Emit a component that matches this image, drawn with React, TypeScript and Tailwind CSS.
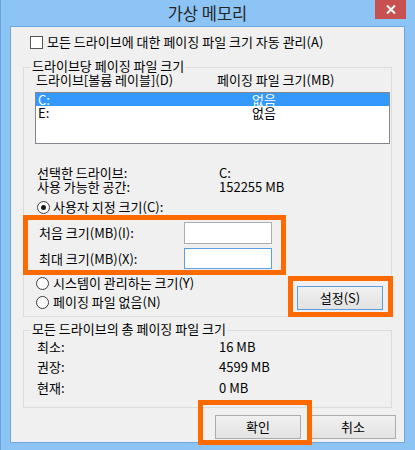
import React from "react";

const FONT = "font-['Noto_Sans_CJK_KR','Noto_Sans',sans-serif]";

function Radio({ checked }: { checked?: boolean }) {
  return (
    <span className="w-[13px] h-[13px] rounded-full border border-[#3c3c3c] bg-white flex items-center justify-center shrink-0">
      {checked && <span className="w-[5px] h-[5px] rounded-full bg-[#1a1a1a]" />}
    </span>
  );
}

function GroupBox({ label, className, children }: { label: string; className: string; children: React.ReactNode }) {
  return (
    <div className={"relative ml-[12px] w-[369px] border border-[#dcdcdc] flex flex-col " + className}>
      <span className="absolute left-[7px] top-[-8px] px-[1px] bg-[#f0f0f0] leading-[12px]">{label}</span>
      {children}
    </div>
  );
}

function InfoRow({ label, value, className }: { label: string; value: string; className?: string }) {
  return (
    <div className={"flex h-[14px] items-center pl-[13px] " + (className ?? "")}>
      <span className="w-[182px]">{label}</span>
      <span>{value}</span>
    </div>
  );
}

function WinButton({ text, focused }: { text: string; focused?: boolean }) {
  return (
    <button
      className={
        "w-[86px] h-[24px] flex items-center justify-center bg-gradient-to-b from-[#f0f0f0] to-[#e3e3e3] border " +
        (focused ? "border-[#5aa0e0]" : "border-[#acacac]")
      }
    >
      {text}
    </button>
  );
}

export default function App() {
  return (
    <div className={"relative w-[415px] h-[450px] bg-[#8cc5f5] text-[13px] leading-[14px] text-black overflow-hidden border-l border-[#6aa4dd] " + FONT}>
      {/* title bar */}
      <div className="h-[26px] flex items-start">
        <div className="w-[39px]" />
        <div className="flex-1 h-[26px] flex items-center justify-center text-[16.5px] text-[#262626]">가상 메모리</div>
        <div className="w-[31px] h-[19px] mr-[9px] bg-[#c75050] flex items-center justify-center">
          <svg width="10" height="9" viewBox="0 0 10 9">
            <path d="M1 0.5 L9 8.5 M9 0.5 L1 8.5" stroke="white" strokeWidth="2" />
          </svg>
        </div>
      </div>

      {/* client area */}
      <div className="ml-[9px] w-[395px] h-[417px] border border-[#6ea6de] bg-[#f0f0f0] flex flex-col">
        <div className="mt-[8px] h-[14px] flex items-center pl-[19px] gap-[4px]">
          <span className="w-[13px] h-[13px] border border-[#555] bg-white shrink-0" />
          <span>모든 드라이브에 대한 페이징 파일 크기 자동 관리(A)</span>
        </div>

        <GroupBox label="드라이브당 페이징 파일 크기" className="mt-[18px] h-[250px]">
          <div className="mt-[5px] h-[14px] flex items-center pl-[12px]">
            <span className="w-[181px]">드라이브[볼륨 레이블](D)</span>
            <span>페이징 파일 크기(MB)</span>
          </div>
          <div className="mt-[5px] ml-[11px] w-[355px] h-[52px] border border-[#828790] bg-white flex flex-col leading-[13px]">
            <div className="h-[13px] bg-[#3399ff] text-white flex items-center pl-[2px]">
              <span className="w-[214px]">C:</span>
              <span>없음</span>
            </div>
            <div className="h-[13px] flex items-center pl-[2px]">
              <span className="w-[214px]">E:</span>
              <span>없음</span>
            </div>
          </div>
          <InfoRow label="선택한 드라이브:" value="C:" className="mt-[22px]" />
          <InfoRow label="사용 가능한 공간:" value="152255 MB" />
          <div className="mt-[6px] h-[14px] flex items-center pl-[13px] gap-[3px]">
            <Radio checked />
            <span>사용자 지정 크기(C):</span>
          </div>
          <div className="mt-[8px] h-[22px] flex items-center pl-[15px]">
            <span className="w-[145px]">처음 크기(MB)(I):</span>
            <span className="w-[88px] h-[22px] border border-[#abadb3] bg-white" />
          </div>
          <div className="mt-[4px] h-[21px] flex items-center pl-[15px]">
            <span className="w-[145px]">최대 크기(MB)(X):</span>
            <span className="w-[88px] h-[21px] border border-[#5a9fe3] bg-white" />
          </div>
          <div className="flex items-start">
            <div className="w-[273px] flex flex-col">
              <div className="mt-[7px] h-[14px] flex items-center pl-[12px] gap-[4px]">
                <Radio />
                <span>시스템이 관리하는 크기(Y)</span>
              </div>
              <div className="mt-[5px] h-[14px] flex items-center pl-[12px] gap-[4px]">
                <Radio />
                <span>페이징 파일 없음(N)</span>
              </div>
            </div>
            <div className="mt-[17px]">
              <WinButton text="설정(S)" focused />
            </div>
          </div>
        </GroupBox>

        <GroupBox label="모든 드라이브의 총 페이징 파일 크기" className="mt-[13px] h-[78px]">
          <InfoRow label="최소:" value="16 MB" className="mt-[9px]" />
          <InfoRow label="권장:" value="4599 MB" className="mt-[6px]" />
          <InfoRow label="현재:" value="0 MB" className="mt-[7px]" />
        </GroupBox>

        <div className="mt-[7px] flex justify-end gap-[9px] pr-[8px]">
          <WinButton text="확인" />
          <WinButton text="취소" />
        </div>
      </div>

      {/* orange highlight annotations */}
      <div className="absolute left-[22px] top-[215px] w-[263px] h-[60px] border-[5px] border-[#ff6a00] pointer-events-none" />
      <div className="absolute left-[287px] top-[276px] w-[105px] h-[41px] border-[5px] border-[#ff6a00] pointer-events-none" />
      <div className="absolute left-[197px] top-[400px] w-[114px] h-[45px] border-[5px] border-[#ff6a00] pointer-events-none" />
    </div>
  );
}
